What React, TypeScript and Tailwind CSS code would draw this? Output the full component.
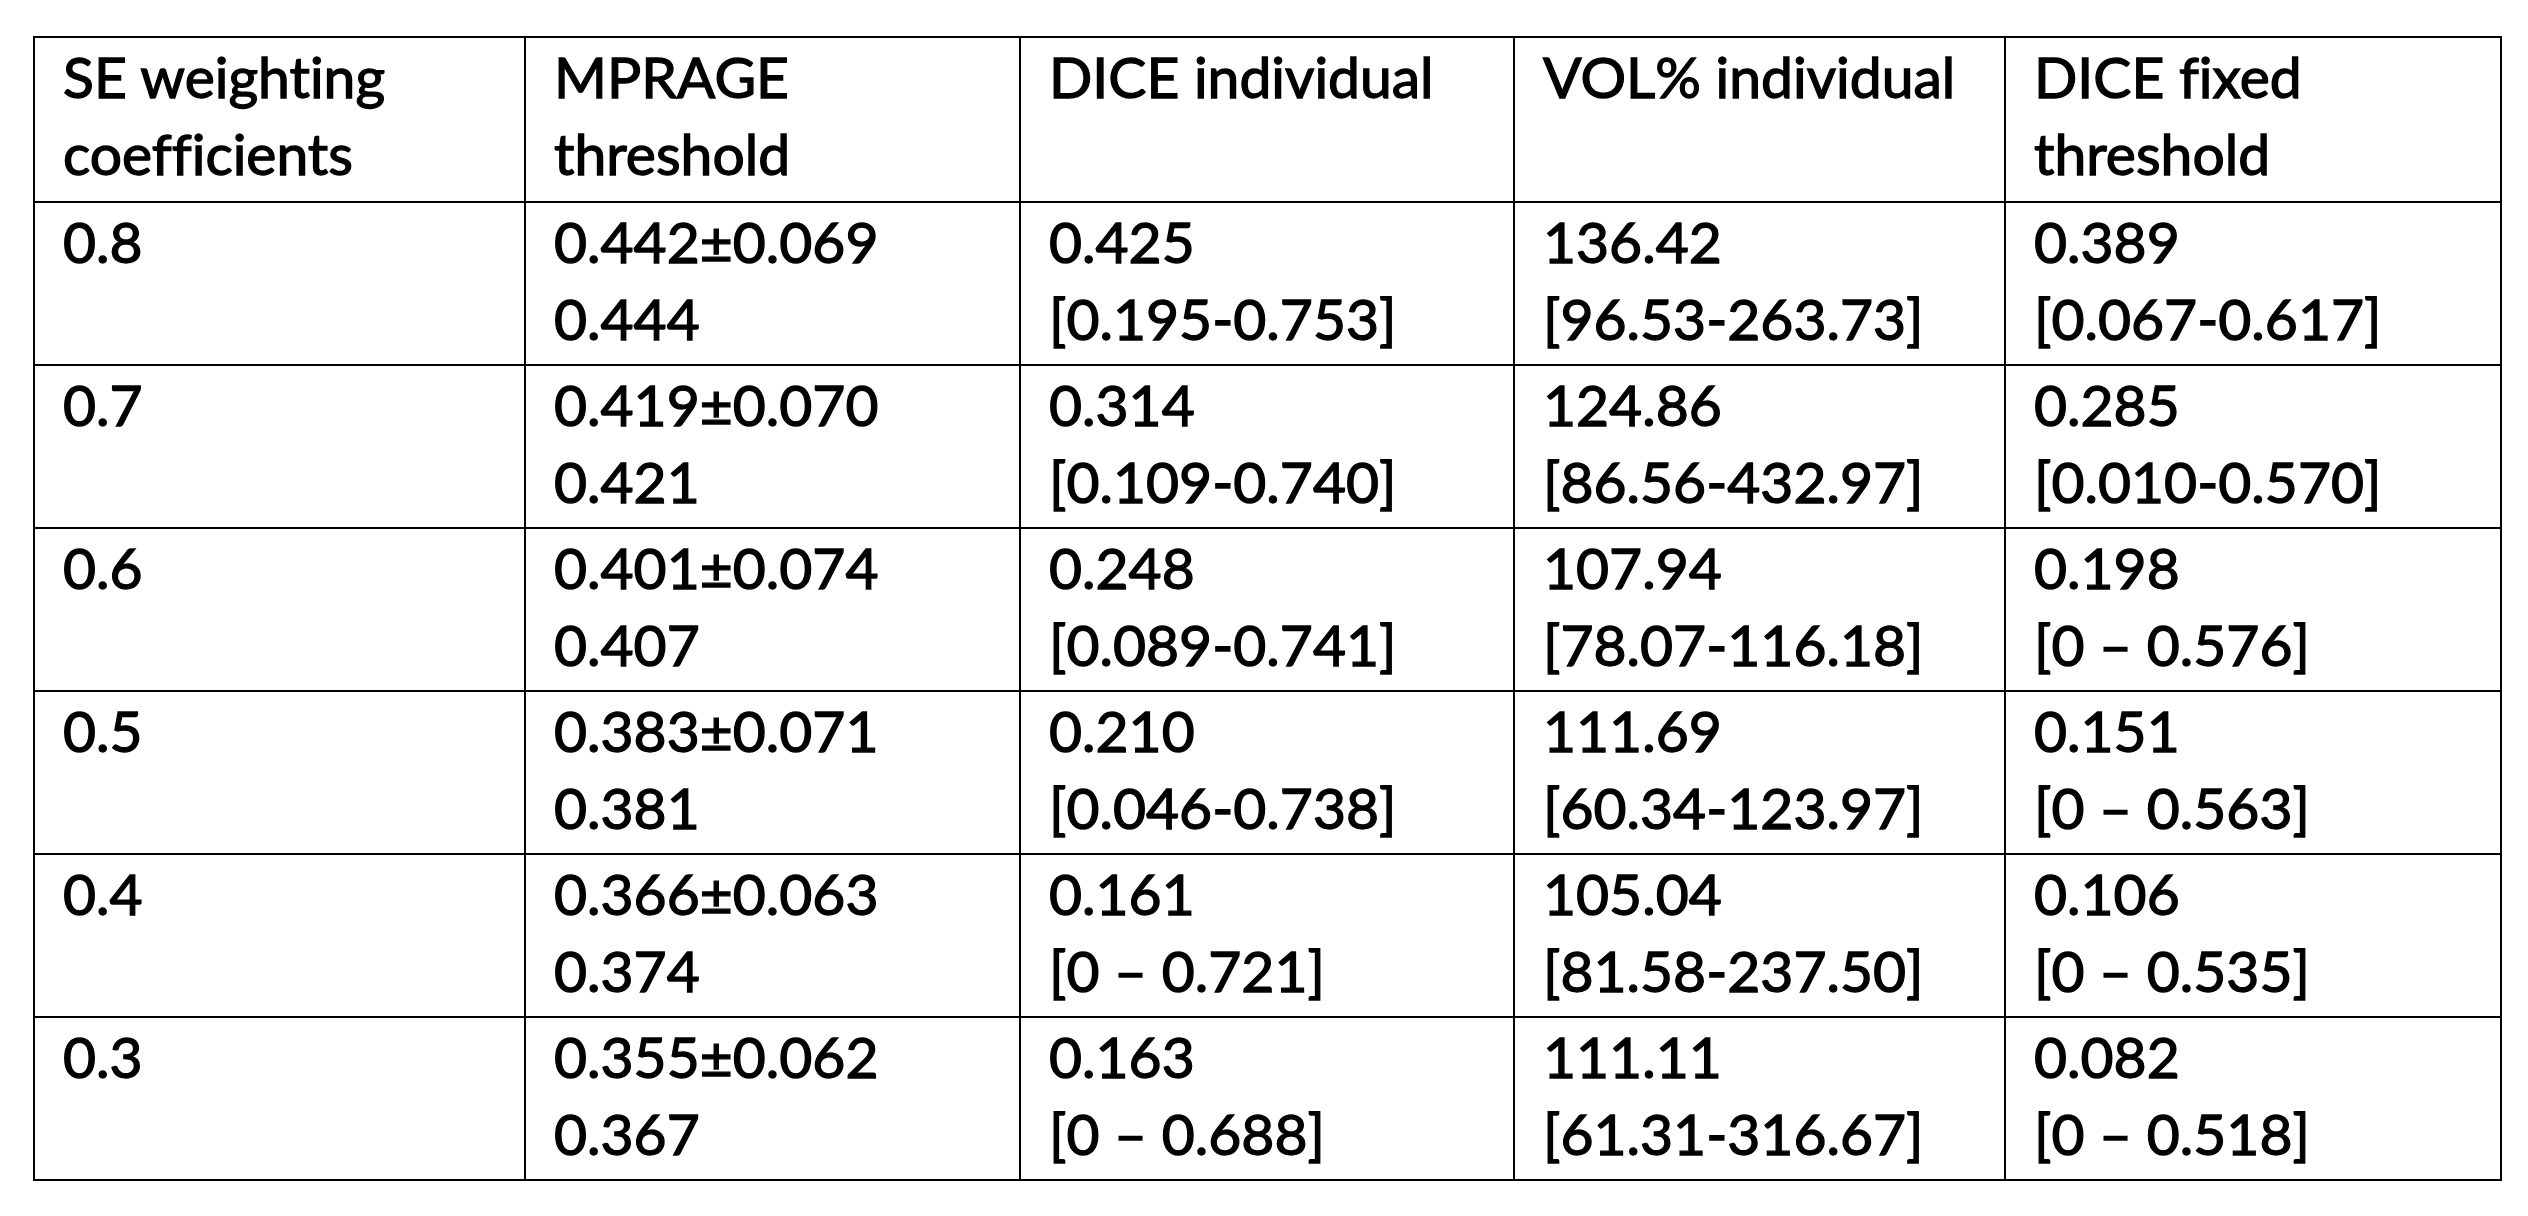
const header = [
  ["SE weighting", "coefficients"],
  ["MPRAGE", "threshold"],
  ["DICE individual"],
  ["VOL% individual"],
  ["DICE fixed", "threshold"],
];

const rows: string[][][] = [
  [["0.8"], ["0.442±0.069", "0.444"], ["0.425", "[0.195-0.753]"], ["136.42", "[96.53-263.73]"], ["0.389", "[0.067-0.617]"]],
  [["0.7"], ["0.419±0.070", "0.421"], ["0.314", "[0.109-0.740]"], ["124.86", "[86.56-432.97]"], ["0.285", "[0.010-0.570]"]],
  [["0.6"], ["0.401±0.074", "0.407"], ["0.248", "[0.089-0.741]"], ["107.94", "[78.07-116.18]"], ["0.198", "[0 – 0.576]"]],
  [["0.5"], ["0.383±0.071", "0.381"], ["0.210", "[0.046-0.738]"], ["111.69", "[60.34-123.97]"], ["0.151", "[0 – 0.563]"]],
  [["0.4"], ["0.366±0.063", "0.374"], ["0.161", "[0 – 0.721]"], ["105.04", "[81.58-237.50]"], ["0.106", "[0 – 0.535]"]],
  [["0.3"], ["0.355±0.062", "0.367"], ["0.163", "[0 – 0.688]"], ["111.11", "[61.31-316.67]"], ["0.082", "[0 – 0.518]"]],
];

function Cell({ lines }: { lines: string[] }) {
  return (
    <td className="border-2 border-black pl-[28px] pr-2 pt-0 align-top">
      {lines.map((l, i) => (
        <div key={i} className="whitespace-nowrap">
          {l}
        </div>
      ))}
    </td>
  );
}

export default function App() {
  return (
    <div className="min-h-screen w-[2528px] bg-white pl-[33px] pt-[36px] text-black">
      <table
        className="table-fixed border-collapse text-[57px] leading-[77px] [font-variant-ligatures:none] [-webkit-text-stroke:1.3px_black]"
        style={{ fontFamily: "Lato, 'Open Sans', sans-serif" }}
      >
        <colgroup>
          <col className="w-[491px]" />
          <col className="w-[495px]" />
          <col className="w-[494px]" />
          <col className="w-[491px]" />
          <col className="w-[496px]" />
        </colgroup>
        <tbody>
          <tr className="h-[165px]">
            {header.map((h, i) => (
              <Cell key={i} lines={h} />
            ))}
          </tr>
          {rows.map((r, i) => (
            <tr key={i} className="h-[163px]">
              {r.map((c, j) => (
                <Cell key={j} lines={c} />
              ))}
            </tr>
          ))}
        </tbody>
      </table>
    </div>
  );
}
